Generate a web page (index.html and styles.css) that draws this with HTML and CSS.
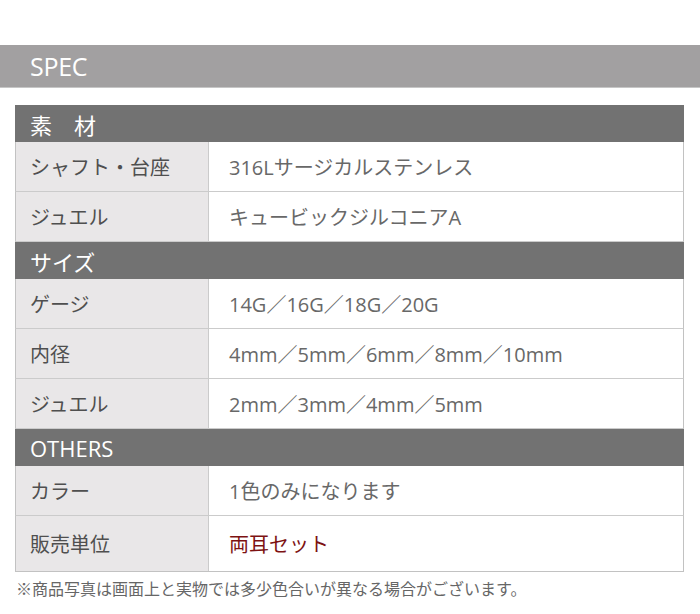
FILE: index.html
```html
<!DOCTYPE html>
<html lang="ja">
<head>
<meta charset="utf-8">
<link rel="stylesheet" href="styles.css">
</head>
<body>
<div class="page">
  <h2 class="spec-title">SPEC</h2>
  <div class="spec">
    <div class="sec-head">素　材</div>
    <div class="row"><div class="label">シャフト・台座</div><div class="value">316Lサージカルステンレス</div></div>
    <div class="row"><div class="label">ジュエル</div><div class="value">キュービックジルコニアA</div></div>
    <div class="sec-head">サイズ</div>
    <div class="row"><div class="label">ゲージ</div><div class="value">14G／16G／18G／20G</div></div>
    <div class="row"><div class="label">内径</div><div class="value">4mm／5mm／6mm／8mm／10mm</div></div>
    <div class="row"><div class="label">ジュエル</div><div class="value">2mm／3mm／4mm／5mm</div></div>
    <div class="sec-head">OTHERS</div>
    <div class="row"><div class="label">カラー</div><div class="value">1色のみになります</div></div>
    <div class="row row-last"><div class="label">販売単位</div><div class="value value-red">両耳セット</div></div>
  </div>
  <p class="note">※商品写真は画面上と実物では多少色合いが異なる場合がございます。</p>
</div>
</body>
</html>
```

FILE: styles.css
```css
html, body {
  margin: 0;
  padding: 0;
  background: #ffffff;
}

.page {
  width: 700px;
  padding-top: 45px;
  font-family: "Open Sans", "Noto Sans CJK JP", sans-serif;
}

.spec-title {
  margin: 0;
  height: 42px;
  padding-left: 30px;
  display: flex;
  align-items: center;
  background: #a2a0a1;
  border-bottom: 1px solid #c6c6c6;
  color: #ffffff;
  font-size: 25px;
  font-weight: 400;
  letter-spacing: -0.3px;
}

.spec {
  margin: 17px 16px 0 15px;
}

.sec-head {
  height: 37px;
  box-sizing: border-box;
  display: flex;
  align-items: center;
  padding-left: 15px;
  background: #727272;
  color: #ffffff;
  font-size: 22px;
  font-weight: 400;
}

.row {
  display: flex;
  height: 50px;
  box-sizing: border-box;
  border-left: 1px solid #c2c2c2;
  border-right: 1px solid #c2c2c2;
  border-bottom: 1px solid #cbcbcb;
}

.row-last {
  height: 56px;
  border-bottom-color: #c2c2c2;
}

.label {
  width: 193px;
  box-sizing: border-box;
  padding-left: 14px;
  display: flex;
  align-items: center;
  background: #e9e7e8;
  border-right: 1px solid #cbcbcb;
  color: #4f4f4f;
  font-size: 20px;
}

.value {
  flex: 1;
  padding-left: 20px;
  display: flex;
  align-items: center;
  color: #686868;
  font-size: 20px;
}

.value-red {
  color: #7d1212;
}

.note {
  margin: 4px 0 0 16px;
  line-height: 24px;
  color: #666666;
  font-size: 16px;
  font-family: "Noto Sans CJK JP", sans-serif;
}
```
